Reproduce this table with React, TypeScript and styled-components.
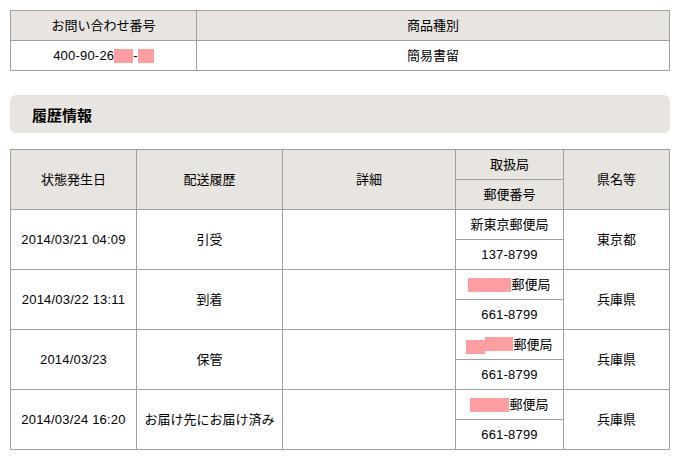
import React from "react";
import styled, { createGlobalStyle } from "styled-components";

const Global = createGlobalStyle`
  html, body { margin: 0; padding: 0; background: #fff; }
  body {
    font-family: "Liberation Sans", "Noto Sans CJK JP", sans-serif;
    font-size: 13px;
    color: #000;
  }
`;

const Page = styled.div`
  padding: 10px;
  width: 660px;
  display: flex;
  flex-direction: column;
`;

const Grid = styled.div<{ $cols: string; $rows: number }>`
  display: grid;
  grid-template-columns: ${(p) => p.$cols};
  grid-template-rows: repeat(${(p) => p.$rows}, 29px);
  gap: 1px;
  padding: 1px;
  background: #a0a0a0;
`;

const Cell = styled.div<{ $head?: boolean; $span?: number }>`
  background: ${(p) => (p.$head ? "#e8e4e0" : "#fff")};
  grid-row: span ${(p) => p.$span ?? 1};
  display: flex;
  align-items: center;
  justify-content: center;
  white-space: nowrap;
  line-height: 1;
`;

const Num = styled.span`
  letter-spacing: 0.2px;
`;

const Heading = styled.div`
  margin: 24px 0 16px;
  height: 38px;
  background: #e8e4e0;
  border-radius: 6px;
  display: flex;
  align-items: center;
  padding-left: 22px;
  font-weight: bold;
  font-size: 15px;
`;

const Redact = styled.span<{ $w: number; $dy?: number }>`
  display: inline-block;
  width: ${(p) => p.$w}px;
  height: 14px;
  background: #ff9ea0;
  transform: translateY(${(p) => p.$dy ?? 0}px);
`;

type Row = {
  date: string;
  status: string;
  office: React.ReactNode;
  zip: string;
  pref: string;
};

const rows: Row[] = [
  { date: "2014/03/21 04:09", status: "引受", office: "新東京郵便局", zip: "137-8799", pref: "東京都" },
  {
    date: "2014/03/22 13:11",
    status: "到着",
    office: (
      <>
        <Redact $w={43} />郵便局
      </>
    ),
    zip: "661-8799",
    pref: "兵庫県",
  },
  {
    date: "2014/03/23",
    status: "保管",
    office: (
      <>
        <Redact $w={19} $dy={2} />
        <Redact $w={28} $dy={-1} />郵便局
      </>
    ),
    zip: "661-8799",
    pref: "兵庫県",
  },
  {
    date: "2014/03/24 16:20",
    status: "お届け先にお届け済み",
    office: (
      <>
        <Redact $w={39} />郵便局
      </>
    ),
    zip: "661-8799",
    pref: "兵庫県",
  },
];

export default function App() {
  return (
    <>
      <Global />
      <Page>
        <Grid $cols="185px 472px" $rows={2}>
          <Cell $head>お問い合わせ番号</Cell>
          <Cell $head>商品種別</Cell>
          <Cell>
            <Num>400-90-26</Num>
            <Redact $w={19} />
            <Num>-</Num>
            <Redact $w={16} />
          </Cell>
          <Cell>簡易書留</Cell>
        </Grid>

        <Heading>履歴情報</Heading>

        <Grid $cols="125px 145px 172px 107px 105px" $rows={10}>
          <Cell $head $span={2}>状態発生日</Cell>
          <Cell $head $span={2}>配送履歴</Cell>
          <Cell $head $span={2}>詳細</Cell>
          <Cell $head>取扱局</Cell>
          <Cell $head $span={2}>県名等</Cell>
          <Cell $head>郵便番号</Cell>
          {rows.map((r, i) => (
            <React.Fragment key={i}>
              <Cell $span={2}>
                <Num>{r.date}</Num>
              </Cell>
              <Cell $span={2}>{r.status}</Cell>
              <Cell $span={2} />
              <Cell>{r.office}</Cell>
              <Cell $span={2}>{r.pref}</Cell>
              <Cell>
                <Num>{r.zip}</Num>
              </Cell>
            </React.Fragment>
          ))}
        </Grid>
      </Page>
    </>
  );
}
